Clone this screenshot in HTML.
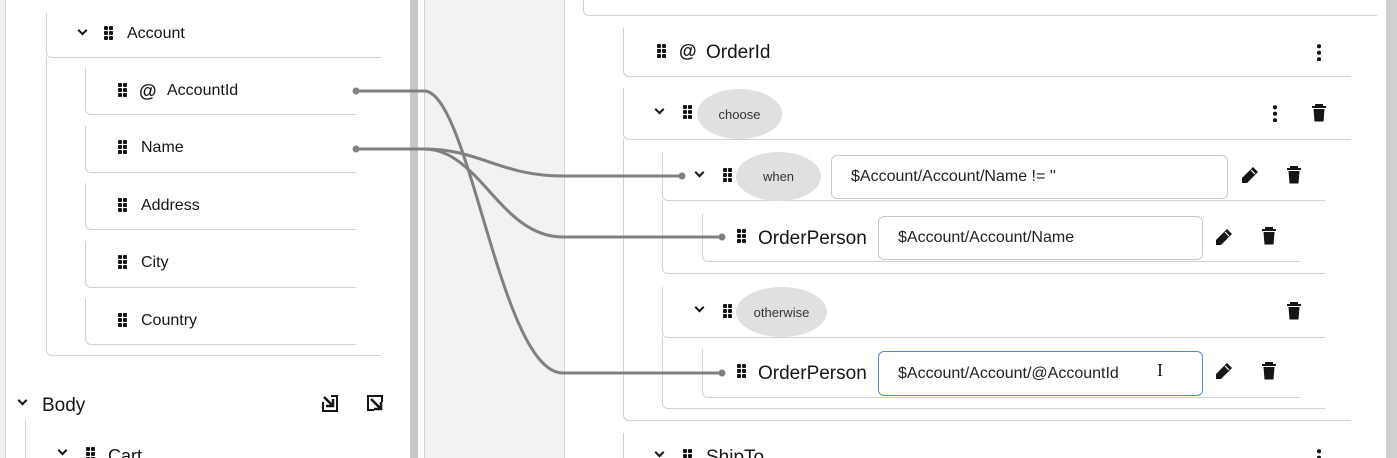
<!DOCTYPE html>
<html><head><meta charset="utf-8"><style>
*{box-sizing:border-box;margin:0;padding:0}
html,body{width:1397px;height:458px;overflow:hidden}
body{background:#fff;font-family:"Liberation Sans",sans-serif;color:#151515;position:relative}
.a{position:absolute}
.bx{position:absolute;border-left:1px solid #d2d2d2;border-bottom:1px solid #d2d2d2;border-bottom-left-radius:6px}
.t{position:absolute;white-space:nowrap;line-height:1}
.grip{position:absolute;width:4px;height:4px;background:#151515;border-radius:1px;box-shadow:5px 0 #151515,0 5px #151515,5px 5px #151515,0 10px #151515,5px 10px #151515;margin-top:-1px}
.chev{position:absolute;width:7px;height:7px;border-right:2.5px solid #151515;border-bottom:2.5px solid #151515;transform:rotate(45deg)}
.pill{position:absolute;background:#e0e0e0;border-radius:50%;font-size:13px;display:flex;align-items:center;justify-content:center;color:#333}
.inp{position:absolute;border:1px solid #c8c8c8;border-radius:6px;font-size:16px;padding-left:19px;display:flex;align-items:center;color:#222}
.keb{position:absolute;width:4px;height:18px;background:radial-gradient(circle,#151515 2px,transparent 2.1px) 0 0/4px 6.5px}
</style></head><body>
<div class="a" style="left:0;top:0;width:6px;height:458px;background:#f0f0f0;border-right:1px solid #d2d2d2"></div>
<div class="a" style="left:410px;top:0;width:8px;height:458px;background:#c8c8c8"></div>
<div class="a" style="left:424px;top:0;width:141px;height:458px;background:#f2f2f2;border-left:1px solid #d2d2d2;border-right:1px solid #d2d2d2"></div>
<div class="a" style="left:1386px;top:0;width:11px;height:458px;background:#d0d0d0"></div>

<div class="bx" style="left:46px;top:13px;width:335px;height:45px"></div>
<div class="chev" style="left:79px;top:27px"></div>
<div class="grip" style="left:104px;top:27px"></div>
<div class="t" style="left:127px;top:26px;font-size:16px">Account</div>
<div class="bx" style="left:46px;top:57px;width:335px;height:299px"></div>

<div class="bx" style="left:85px;top:68px;width:271px;height:47px"></div>
<div class="grip" style="left:118px;top:84px"></div>
<div class="t" style="left:139px;top:82px;font-size:18px;font-weight:bold">@</div>
<div class="t" style="left:167px;top:83px;font-size:16px">AccountId</div>
<div class="bx" style="left:85px;top:126px;width:271px;height:47px"></div>
<div class="grip" style="left:118px;top:141px"></div>
<div class="t" style="left:141px;top:140px;font-size:16px">Name</div>
<div class="bx" style="left:85px;top:183px;width:271px;height:47px"></div>
<div class="grip" style="left:118px;top:199px"></div>
<div class="t" style="left:141px;top:198px;font-size:16px">Address</div>
<div class="bx" style="left:85px;top:241px;width:271px;height:47px"></div>
<div class="grip" style="left:118px;top:256px"></div>
<div class="t" style="left:141px;top:255px;font-size:16px">City</div>
<div class="bx" style="left:85px;top:298px;width:271px;height:47px"></div>
<div class="grip" style="left:118px;top:314px"></div>
<div class="t" style="left:141px;top:313px;font-size:16px">Country</div>

<div class="chev" style="left:19px;top:397px"></div>
<div class="t" style="left:42px;top:396px;font-size:19px">Body</div>
<svg class="a" style="left:320px;top:393px" width="20" height="20" viewBox="0 0 20 20"><path d="M3 9V18H17V3H11" fill="none" stroke="#151515" stroke-width="2"/><path d="M4 4L13 13M13 6V13H6" fill="none" stroke="#151515" stroke-width="2.5"/></svg>
<svg class="a" style="left:365px;top:393px" width="20" height="20" viewBox="0 0 20 20"><path d="M9 17H3V3H17V9" fill="none" stroke="#151515" stroke-width="2"/><path d="M6 6L16 16M16 9V16H9" fill="none" stroke="#151515" stroke-width="2.5"/></svg>
<div class="a" style="left:25px;top:420px;width:1px;height:40px;background:#d2d2d2"></div>
<div class="chev" style="left:59px;top:447px"></div>
<div class="grip" style="left:86px;top:448px"></div>
<div class="t" style="left:108px;top:447px;font-size:18px">Cart</div>

<div class="bx" style="left:583px;top:-10px;width:794px;height:26px"></div>
<div class="bx" style="left:623px;top:28px;width:728px;height:49px"></div>
<div class="grip" style="left:657px;top:45px"></div>
<div class="t" style="left:679px;top:42px;font-size:18px;font-weight:bold">@</div>
<div class="t" style="left:706px;top:43px;font-size:19px">OrderId</div>
<div class="keb" style="left:1317px;top:43px"></div>

<div class="bx" style="left:623px;top:88px;width:728px;height:52px"></div>
<div class="chev" style="left:656px;top:106px"></div>
<div class="grip" style="left:683px;top:106px"></div>
<div class="pill" style="left:697px;top:89px;width:85px;height:50px">choose</div>
<div class="keb" style="left:1273px;top:104px"></div>
<svg class="a" style="left:1311px;top:104px" width="16" height="18" viewBox="0 0 16 18"><path d="M1 3H15M5 3V1H11V3" stroke="#151515" stroke-width="2" fill="none"/><path d="M2.5 5H13.5L12.5 17.5H3.5Z" fill="#151515"/></svg>
<div class="bx" style="left:623px;top:139px;width:728px;height:282px"></div>

<div class="bx" style="left:662px;top:152px;width:663px;height:49px"></div>
<div class="chev" style="left:696px;top:169px"></div>
<div class="grip" style="left:723px;top:169px"></div>
<div class="pill" style="left:736px;top:152px;width:85px;height:49px">when</div>
<div class="inp" style="left:831px;top:155px;width:397px;height:44px">$Account/Account/Name != ''</div>
<svg class="a" style="left:1241px;top:166px" width="18" height="18" viewBox="0 0 18 18"><path d="M12 1L17 6L6 17L1 17L1 12Z" fill="#151515"/><path d="M10 4L14 8" stroke="#fff" stroke-width="1.2"/></svg>
<svg class="a" style="left:1286px;top:166px" width="16" height="18" viewBox="0 0 16 18"><path d="M1 3H15M5 3V1H11V3" stroke="#151515" stroke-width="2" fill="none"/><path d="M2.5 5H13.5L12.5 17.5H3.5Z" fill="#151515"/></svg>
<div class="bx" style="left:662px;top:200px;width:663px;height:74px"></div>

<div class="bx" style="left:702px;top:214px;width:598px;height:48px"></div>
<div class="grip" style="left:737px;top:230px"></div>
<div class="t" style="left:758px;top:229px;font-size:19px">OrderPerson</div>
<div class="inp" style="left:878px;top:216px;width:325px;height:44px">$Account/Account/Name</div>
<svg class="a" style="left:1215px;top:228px" width="18" height="18" viewBox="0 0 18 18"><path d="M12 1L17 6L6 17L1 17L1 12Z" fill="#151515"/><path d="M10 4L14 8" stroke="#fff" stroke-width="1.2"/></svg>
<svg class="a" style="left:1261px;top:227px" width="16" height="18" viewBox="0 0 16 18"><path d="M1 3H15M5 3V1H11V3" stroke="#151515" stroke-width="2" fill="none"/><path d="M2.5 5H13.5L12.5 17.5H3.5Z" fill="#151515"/></svg>

<div class="bx" style="left:662px;top:287px;width:663px;height:51px"></div>
<div class="chev" style="left:696px;top:304px"></div>
<div class="grip" style="left:723px;top:305px"></div>
<div class="pill" style="left:736px;top:287px;width:91px;height:50px">otherwise</div>
<svg class="a" style="left:1286px;top:302px" width="16" height="18" viewBox="0 0 16 18"><path d="M1 3H15M5 3V1H11V3" stroke="#151515" stroke-width="2" fill="none"/><path d="M2.5 5H13.5L12.5 17.5H3.5Z" fill="#151515"/></svg>
<div class="bx" style="left:662px;top:337px;width:663px;height:72px"></div>

<div class="bx" style="left:702px;top:349px;width:598px;height:49px"></div>
<div class="grip" style="left:737px;top:365px"></div>
<div class="t" style="left:758px;top:364px;font-size:19px">OrderPerson</div>
<div class="inp" style="left:878px;top:351px;width:325px;height:45px;border-color:#4a90d9">$Account/Account/@AccountId</div>
<div class="t" style="left:1157px;top:361px;font-size:18px;font-family:'Liberation Serif',serif">I</div>
<svg class="a" style="left:1215px;top:362px" width="18" height="18" viewBox="0 0 18 18"><path d="M12 1L17 6L6 17L1 17L1 12Z" fill="#151515"/><path d="M10 4L14 8" stroke="#fff" stroke-width="1.2"/></svg>
<svg class="a" style="left:1261px;top:362px" width="16" height="18" viewBox="0 0 16 18"><path d="M1 3H15M5 3V1H11V3" stroke="#151515" stroke-width="2" fill="none"/><path d="M2.5 5H13.5L12.5 17.5H3.5Z" fill="#151515"/></svg>

<div class="a" style="left:623px;top:433px;width:1px;height:30px;background:#d2d2d2"></div>
<div class="chev" style="left:656px;top:449px"></div>
<div class="grip" style="left:683px;top:450px"></div>
<div class="t" style="left:706px;top:448px;font-size:19px">ShipTo</div>
<div class="keb" style="left:1317px;top:448px"></div>

<svg class="a" style="left:0;top:0" width="1397" height="458">
<g fill="none" stroke="#808080" stroke-width="3">
<path d="M356 91H424C470 91 500 373 563 373H722"/>
<path d="M356 149H424C480 149 500 176 563 176H682"/>
<path d="M356 149H424C480 149 500 237 563 237H722"/>
</g>
<g fill="#808080"><circle cx="356" cy="91" r="3.5"/><circle cx="356" cy="149" r="3.5"/><circle cx="682" cy="176" r="3.5"/><circle cx="722" cy="237" r="3.5"/><circle cx="722" cy="373" r="3.5"/></g>
</svg>
</body></html>
